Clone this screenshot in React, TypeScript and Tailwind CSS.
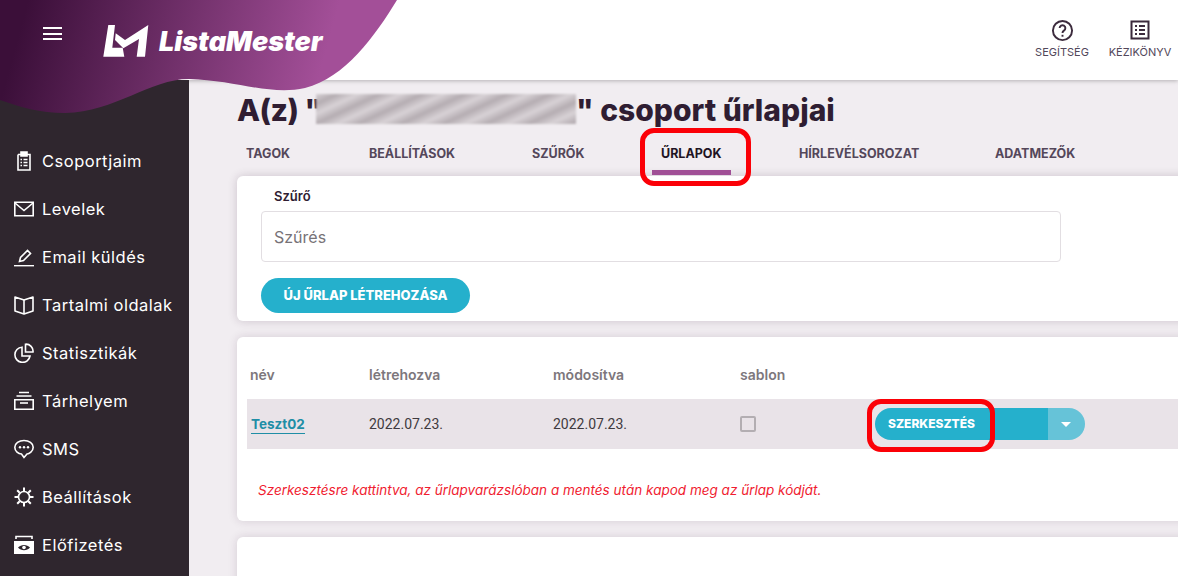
import { ReactNode } from 'react';

const tabs = [
  { label: 'TAGOK', width: 'w-[123px]' },
  { label: 'BEÁLLÍTÁSOK', width: 'w-[163px]' },
  { label: 'SZŰRŐK', width: 'w-[129px]' },
  { label: 'ŰRLAPOK', width: 'w-[138px]', active: true },
  { label: 'HÍRLEVÉLSOROZAT', width: 'w-[196px]' },
  { label: 'ADATMEZŐK', width: 'w-[100px]' },
];

function Icon({ children, className = 'w-5 h-5' }: { children: ReactNode; className?: string }) {
  return (
    <svg viewBox="0 0 20 20" fill="none" stroke="currentColor" strokeWidth="1.6" className={className}>
      {children}
    </svg>
  );
}

const nav: { label: string; icon: ReactNode }[] = [
  {
    label: 'Csoportjaim',
    icon: (
      <Icon>
        <path d="M4 3.500h3M13 3.500h3V19H4V3.500" />
        <path d="M7 1h6v4H7z" fill="currentColor" />
        <path d="M6.500 8.500h1.500M9.500 8.500h4M6.500 11.500h1.500M9.500 11.500h4M6.500 14.500h1.500M9.500 14.500h4" />
      </Icon>
    ),
  },
  {
    label: 'Levelek',
    icon: (
      <Icon>
        <path d="M.8 3.300h18.400v13.400H.8z" />
        <path d="M1 4l9 7.500L19 4" />
      </Icon>
    ),
  },
  {
    label: 'Email küldés',
    icon: (
      <Icon>
        <path d="M5.500 14.500l1-4 7-7 3 3-7 7z" />
        <path d="M0 18.700h20" strokeWidth="1.400" />
      </Icon>
    ),
  },
  {
    label: 'Tartalmi oldalak',
    icon: (
      <Icon>
        <path d="M10 5L1 2v14l9 3 9-3V2z" strokeLinejoin="round" />
        <path d="M10 5v14" />
      </Icon>
    ),
  },
  {
    label: 'Statisztikák',
    icon: (
      <Icon>
        <path d="M8 4.200A7.600 7.600 0 1 0 16 13H8z" />
        <path d="M11.500 1.200A7 7 0 0 1 19 9h-7.500z" />
      </Icon>
    ),
  },
  {
    label: 'Tárhelyem',
    icon: (
      <Icon>
        <path d="M5 1.500h10M2.500 5h15" />
        <path d="M.8 8.800h18.400v9.400H.8z" />
        <path d="M6 12h8" />
      </Icon>
    ),
  },
  {
    label: 'SMS',
    icon: (
      <Icon>
        <path d="M10 1.500c5 0 9.200 2.800 9.200 6.800S15 15 13 15l-3 3.500L7.500 15C4.500 15 .8 12.300.8 8.300S5 1.500 10 1.500z" />
        <circle cx="6" cy="8.300" r="1.200" fill="currentColor" stroke="none" />
        <circle cx="10" cy="8.300" r="1.200" fill="currentColor" stroke="none" />
        <circle cx="14" cy="8.300" r="1.200" fill="currentColor" stroke="none" />
      </Icon>
    ),
  },
  {
    label: 'Beállítások',
    icon: (
      <Icon>
        <circle cx="10" cy="10" r="5.500" />
        <path d="M10 .5v3.500M10 16v3.500M.5 10H4M16 10h3.500M3.200 3.200l2.500 2.500M14.300 14.300l2.500 2.500M16.800 3.200l-2.500 2.500M5.700 14.300l-2.500 2.500" strokeWidth="2" />
      </Icon>
    ),
  },
  {
    label: 'Előfizetés',
    icon: (
      <Icon>
        <path d="M2 4V1.500h16V4" />
        <path d="M0 6h20v13H0z" fill="currentColor" stroke="none" />
        <path d="M4 12.500c3-3.500 9-3.500 12 0-3 3.500-9 3.500-12 0z" fill="#2f262e" stroke="none" />
        <circle cx="10" cy="12.500" r="1.800" fill="currentColor" stroke="none" />
      </Icon>
    ),
  },
];

function Wave() {
  return (
    <svg viewBox="0 0 400 115" className="absolute left-0 top-0 w-[400px] h-[115px]">
      <defs>
        <linearGradient id="wave" gradientUnits="userSpaceOnUse" x1="20" y1="30" x2="310" y2="110">
          <stop offset="0" stopColor="#3b0f39" />
          <stop offset="1" stopColor="#a34f98" />
        </linearGradient>
      </defs>
      <path
        d="M0 0H397C375 36 345 78 305 88C270 96 235 80 189 79C150 79 115 112 65 113C40 113 20 107 0 100Z"
        fill="url(#wave)"
      />
    </svg>
  );
}

function Logo() {
  return (
    <svg viewBox="0 0 48 36" className="w-[48px] h-[36px]" fill="white">
      <path d="M6.300 1H13l-2.700 22.700h10.400l1.600 9H1.300z" />
      <path d="M13.700 9.300L23 16 46.300 1 43 32.700h-8.300L37 15l-15.700 9.300L13 16z" />
    </svg>
  );
}

export default function App() {
  return (
    <div className="relative flex flex-col h-screen overflow-hidden bg-[#f1edf1] font-['Inter','Liberation_Sans',sans-serif]">
      <header className="h-[80px] shrink-0 bg-white shadow-[0_1px_4px_rgba(0,0,0,0.25)] flex justify-end items-start pt-[19px] pr-[7px] gap-5 text-[#3c2b3d]">
        <div className="flex flex-col items-center w-[54px]">
          <svg viewBox="0 0 24 24" className="w-[23px] h-[23px]" fill="none" stroke="currentColor" strokeWidth="2">
            <circle cx="12" cy="12" r="10" />
            <path d="M9 9.500a3 3 0 1 1 4.500 2.600c-1 .6-1.500 1.200-1.500 2.400" />
            <path d="M12 16.500v2" />
          </svg>
          <span className="mt-[3px] text-[11px] leading-[14px] text-[#52475a]">SEGÍTSÉG</span>
        </div>
        <div className="flex flex-col items-center w-[62px]">
          <svg viewBox="0 0 20 20" className="w-[20px] h-[20px] mt-[1px]" fill="none" stroke="currentColor" strokeWidth="2">
            <path d="M1.500 1.500h17v17h-17z" />
            <path d="M5 6h2M9 6h6M5 10h2M9 10h6M5 14h2M9 14h6" />
          </svg>
          <span className="mt-[5px] text-[11px] leading-[14px] text-[#52475a]">KÉZIKÖNYV</span>
        </div>
      </header>

      <div className="flex flex-1 min-h-0">
        <aside className="w-[189px] shrink-0 bg-[#2f262e] pt-[57px] text-white">
          {nav.map(item => (
            <div key={item.label} className="h-12 flex items-center pl-[14px] gap-2">
              {item.icon}
              <span className="text-[16.5px] tracking-[0.5px]">{item.label}</span>
            </div>
          ))}
        </aside>

        <main className="flex-1 min-w-0 pl-[48px]">
          <h1 className="h-[60px] pt-[12px] flex items-start text-[30px] leading-[36px] font-extrabold text-[#2f1d32] whitespace-nowrap">
            <span className="w-[79px] tracking-[-0.5px]">A(z) "</span>
            <span className="w-[260px] h-[30px] mt-[2px] bg-[repeating-linear-gradient(155deg,#d8d2d6_0px,#b5adb2_9px,#d8d2d6_18px)] blur-[1px]" />
            <span>" csoport űrlapjai</span>
          </h1>

          <nav className="flex h-[40px] -mt-[4px] text-[12.5px] font-bold">
            {tabs.map(tab => (
              <div key={tab.label} className={tab.width}>
                <div className={tab.active ? 'px-[9px] h-[39px] pt-[9px] border-b-[5px] border-[#a04f96] text-[#1f1423] w-[79px]' : 'pl-[9px] pt-[9px] text-[#54475a]'}>
                  {tab.label}
                </div>
              </div>
            ))}
          </nav>

          <section className="w-[1100px] h-[145px] bg-white rounded-md shadow-[0_0_10px_rgba(60,30,60,0.2)] pl-[24px] pt-[11px]">
            <div className="pl-[13px] text-[13px] leading-[18px] font-semibold text-[#2f1d32]">Szűrő</div>
            <div className="mt-[6px] w-[800px] h-[51px] border border-[#e2dee2] rounded flex items-center pl-[12px] pt-[1px] text-[16px] text-[#777277]">Szűrés</div>
            <button className="mt-[16px] h-[35px] w-[209px] rounded-full bg-[#25b0cc] text-white text-[13px] font-extrabold">ÚJ ŰRLAP LÉTREHOZÁSA</button>
          </section>

          <section className="mt-[16px] w-[1100px] h-[184px] bg-white rounded-md shadow-[0_0_10px_rgba(60,30,60,0.15)] pl-[10px] pt-[55px]">
            <div className="relative flex -mt-[36px] h-[36px] items-center pl-[3px] text-[14px] font-semibold text-[#7d777c]">
              <span className="w-[119px]">név</span>
              <span className="w-[184px]">létrehozva</span>
              <span className="w-[187px]">módosítva</span>
              <span>sablon</span>
            </div>
            <div className="mt-[7px] h-[50px] bg-[#e9e3e8] flex items-center pl-[4px] text-[14px] text-[#3f3a3f] font-['Roboto',sans-serif]">
              <span className="w-[118px] font-bold text-[#1f8ea6]">
                <span className="border-b border-[#1f8ea6] pb-[1px] text-[13.5px] font-['Inter',sans-serif]">Teszt02</span>
              </span>
              <span className="w-[184px]">2022.07.23.</span>
              <span className="w-[187px]">2022.07.23.</span>
              <span className="w-[135px]">
                <span className="block w-[16px] h-[16px] border-2 border-[#b3aeb2] rounded-[2px]" />
              </span>
              <div className="flex h-[32px] w-[210px] rounded-full overflow-hidden text-white font-['Inter',sans-serif]">
                <div className="w-[173px] bg-[#25b0cc] pl-[13px] flex items-center text-[12px] font-extrabold">SZERKESZTÉS</div>
                <div className="flex-1 bg-[#66c3d8] flex items-center justify-center pr-[2px]">
                  <div className="w-0 h-0 border-x-[5px] border-x-transparent border-t-[5px] border-t-white" />
                </div>
              </div>
            </div>
            <p className="mt-[31px] pl-[11px] text-[13.5px] italic text-[#f01c30]">Szerkesztésre kattintva, az űrlapvarázslóban a mentés után kapod meg az űrlap kódját.</p>
          </section>

          <section className="mt-[16px] w-[1100px] h-[100px] bg-white rounded-md shadow-[0_0_10px_rgba(60,30,60,0.15)]" />
        </main>
      </div>

      <Wave />
      <div className="absolute left-[43px] top-[27px] w-[19px] h-[13px] border-y-2 border-white flex items-center">
        <div className="w-full h-[2px] bg-white" />
      </div>
      <div className="absolute left-[102px] top-[24px] flex items-center gap-[9px]">
        <Logo />
        <span className="text-[27px] leading-[36px] font-black italic text-white whitespace-nowrap">ListaMester</span>
      </div>

      <div className="absolute left-[640px] top-[128px] w-[111px] h-[58px] border-[5px] border-[#fb0007] rounded-[14px]" />
      <div className="absolute left-[867px] top-[399px] w-[128px] h-[53px] border-[5px] border-[#fb0007] rounded-[14px]" />
    </div>
  );
}
